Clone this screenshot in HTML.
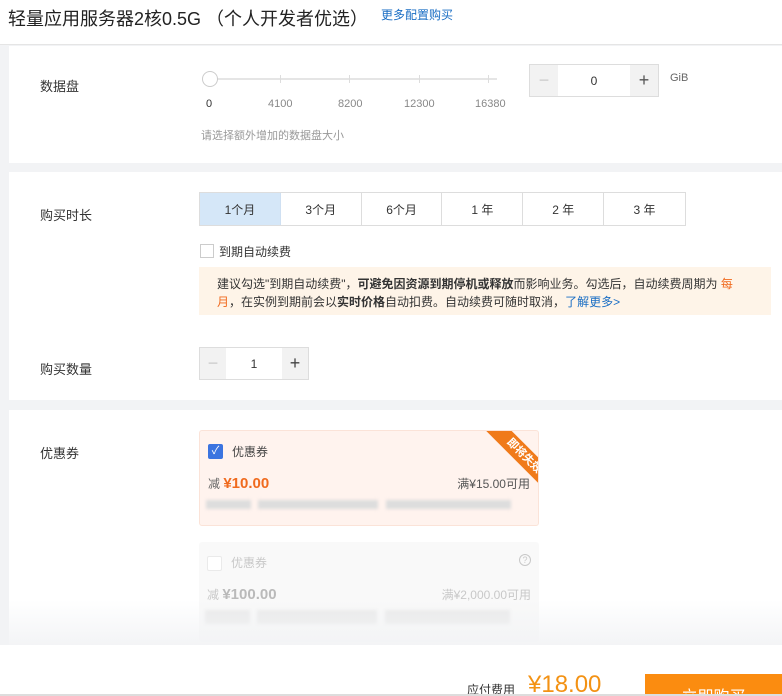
<!DOCTYPE html>
<html style="overflow:hidden;height:696px"><head><meta charset="utf-8"><style>
*{box-sizing:border-box;margin:0;padding:0}
body{width:782px;height:696px;overflow:hidden;background:#f2f3f5;font-family:"Liberation Sans","Noto Sans CJK SC",sans-serif;color:#333;font-size:12px;position:relative}
.abs{position:absolute}
.top{left:0;top:0;width:782px;height:45px;background:#fff;border-bottom:1px solid #e5e5e5}
.sec{left:9px;width:773px;background:#fff}
.lbl{font-size:13px;color:#333}
.stepper{border:1px solid #ddd;display:flex;height:32px}
.stepper .b{width:26px;background:#f2f2f2;color:#999;display:flex;align-items:center;justify-content:center;font-size:18px}
.stepper .v{flex:1;display:flex;align-items:center;justify-content:center;font-size:12px}
.tabs{display:flex;border:1px solid #ddd}
.tabs div{width:81px;height:32px;border-right:1px solid #ddd;display:flex;align-items:center;justify-content:center;font-size:12px;color:#333}
.tabs div:last-child{border-right:none}
.blur{background:#ddd;filter:blur(1.5px);height:9px;position:absolute}
</style></head><body>
<div class="abs top">
 <div class="abs" style="left:8px;top:5px;font-size:18px;color:#222">轻量应用服务器2核0.5G （个人开发者优选）</div>
 <div class="abs" style="left:381px;top:6px;font-size:12px;color:#1a6ec4">更多配置购买</div>
</div>
<div class="abs sec" style="top:46px;height:117px">
 <div class="abs lbl" style="left:31px;top:30px">数据盘</div>
 <div class="abs" style="left:200px;top:32px;width:288px;height:2px;background:#e5e5e5"></div>
 <div class="abs" style="left:193px;top:25px;width:16px;height:16px;border:1px solid #ccc;border-radius:50%;background:#fff"></div>
 <div class="abs" style="left:271px;top:29px;width:1px;height:8px;background:#ddd"></div>
 <div class="abs" style="left:340px;top:29px;width:1px;height:8px;background:#ddd"></div>
 <div class="abs" style="left:410px;top:29px;width:1px;height:8px;background:#ddd"></div>
 <div class="abs" style="left:479px;top:29px;width:1px;height:8px;background:#ddd"></div>
 <div class="abs" style="left:197px;top:52px;font-size:11px;color:#333">0</div>
 <div class="abs" style="left:259px;top:52px;font-size:11px;color:#888">4100</div>
 <div class="abs" style="left:329px;top:52px;font-size:11px;color:#888">8200</div>
 <div class="abs" style="left:395px;top:52px;font-size:11px;color:#888">12300</div>
 <div class="abs" style="left:466px;top:52px;font-size:11px;color:#888">16380</div>
 <div class="abs" style="left:192px;top:81px;font-size:11px;color:#999">请选择额外增加的数据盘大小</div>
 <div class="abs stepper" style="left:520px;top:18px;width:130px;height:33px"><div class="b" style="width:28px;color:#ccc">−</div><div class="v">0</div><div class="b" style="width:28px;color:#555">+</div></div>
 <div class="abs" style="left:661px;top:26px;font-size:11px;color:#666">GiB</div>
</div>
<div class="abs sec" style="top:172px;height:228px">
 <div class="abs lbl" style="left:31px;top:33px">购买时长</div>
 <div class="abs tabs" style="left:190px;top:20px;width:487px">
  <div style="background:#d5e7f8;border-right-color:#cfe0f2">1个月</div><div>3个月</div><div>6个月</div><div>1 年</div><div>2 年</div><div>3 年</div>
 </div>
 <div class="abs" style="left:191px;top:72px;width:14px;height:14px;border:1px solid #ccc"></div>
 <div class="abs" style="left:210px;top:71px;font-size:12px">到期自动续费</div>
 <div class="abs" style="left:190px;top:95px;width:572px;height:48px;background:#fef4e8;padding:8px 18px;font-size:12px;line-height:18px;color:#333">建议勾选"到期自动续费"，<b>可避免因资源到期停机或释放</b>而影响业务。勾选后，自动续费周期为 <span style="color:#f06a1e">每月</span>，在实例到期前会以<b>实时价格</b>自动扣费。自动续费可随时取消，<span style="color:#1a6ec4">了解更多&gt;</span></div>
 <div class="abs lbl" style="left:31px;top:187px">购买数量</div>
 <div class="abs stepper" style="left:190px;top:175px;width:110px;height:33px"><div class="b" style="color:#ccc">−</div><div class="v">1</div><div class="b" style="color:#444">+</div></div>
</div>
<div class="abs sec" style="top:410px;height:235px">
 <div class="abs lbl" style="left:31px;top:33px">优惠券</div>
 <div class="abs" style="left:190px;top:20px;width:340px;height:96px;background:#fff3ee;border:1px solid #fbe3d8;border-radius:3px;overflow:hidden">
  <div class="abs" style="left:8px;top:13px;width:15px;height:15px;background:#3b74e0;border-radius:2px;color:#fff;font-size:11px;text-align:center;line-height:15px">✓</div>
  <div class="abs" style="left:32px;top:12px;font-size:12px;color:#444">优惠券</div>
  <div class="abs" style="left:8px;top:44px;font-size:12px;color:#666">减 <span style="font-size:15px;font-weight:bold;color:#f06a1e">¥10.00</span></div>
  <div class="abs" style="right:8px;top:44px;font-size:12px;color:#555">满¥15.00可用</div>
  <div class="blur" style="left:6px;top:69px;width:45px"></div><div class="blur" style="left:58px;top:69px;width:120px"></div><div class="blur" style="left:186px;top:69px;width:125px"></div>
  <div class="abs" style="left:276px;top:16px;width:96px;height:18px;background:#f07a1a;transform:rotate(45deg);color:#fff;font-size:11px;font-weight:bold;text-align:center;line-height:18px">即将失效</div>
 </div>
 <div class="abs" style="left:190px;top:132px;width:340px;height:100px;background:#f8f8f8;border-radius:3px;opacity:.8">
  <div class="abs" style="left:8px;top:14px;width:15px;height:15px;border:1px solid #e5e5e5;border-radius:2px;background:#fff"></div>
  <div class="abs" style="left:32px;top:12px;font-size:12px;color:#bbb">优惠券</div>
  <div class="abs" style="right:8px;top:12px;width:12px;height:12px;border:1px solid #bbb;border-radius:50%;font-size:9px;color:#bbb;text-align:center;line-height:10px">?</div>
  <div class="abs" style="left:8px;top:44px;font-size:12px;color:#bbb">减 <span style="font-size:15px;font-weight:bold;color:#aaa">¥100.00</span></div>
  <div class="abs" style="right:8px;top:44px;font-size:12px;color:#bbb">满¥2,000.00可用</div>
  <div class="blur" style="left:6px;top:68px;width:45px;height:14px;background:#e5e5e5"></div><div class="blur" style="left:58px;top:68px;width:120px;height:14px;background:#e5e5e5"></div><div class="blur" style="left:186px;top:68px;width:125px;height:14px;background:#e5e5e5"></div>
 </div>
 <div class="abs" style="left:-9px;top:190px;width:782px;height:45px;background:linear-gradient(rgba(242,243,245,0),rgba(242,243,245,.9))"></div>
</div>
<div class="abs" style="left:0;top:645px;width:782px;height:49px;background:#fff;overflow:hidden">
 <div class="abs" style="left:467px;top:36px;font-size:12px;color:#333">应付费用</div>
 <div class="abs" style="left:528px;top:26px;font-size:24px;color:#f39214">¥18.00</div>
 <div class="abs" style="left:645px;top:29px;width:137px;height:25px;background:#fb8c10;color:#fff;font-size:16px;text-align:center;padding-top:9px">立即购买</div>
</div>
<div class="abs" style="left:0;top:694px;width:782px;height:2px;background:#ddd"></div>
</body></html>
